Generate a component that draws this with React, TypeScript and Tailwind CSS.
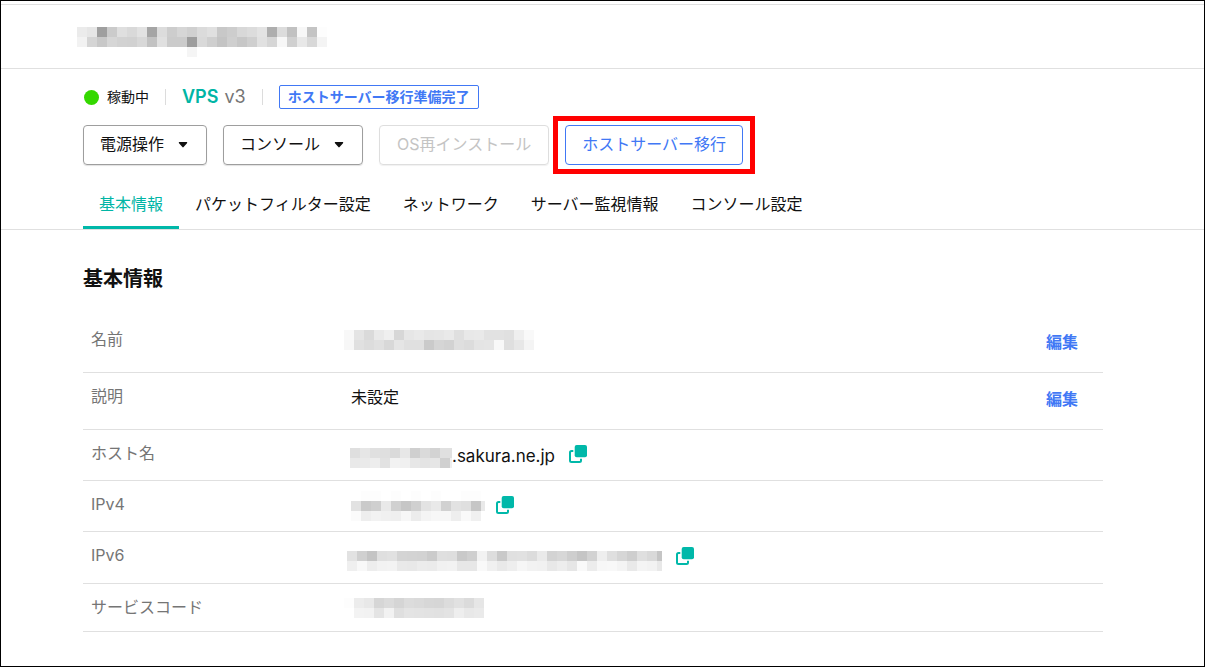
import React from "react";

const CELL = 10;

type MosaicProps = {
  label: string;
  rows: string[];
  left: number;
  top: number;
  width: number;
  height: number;
};

// Each row lists one two-digit hex grey level per cell; ".." leaves a cell empty.
function Mosaic({ label, rows, left, top, width, height }: MosaicProps) {
  return (
    <svg role="img" aria-label={label} width={width} height={height} className="shrink-0" shapeRendering="crispEdges">
      {rows.map((row, y) =>
        row.split(" ").map((g, x) =>
          g === ".." ? null : (
            <rect
              key={`${x}-${y}`}
              x={left + x * CELL}
              y={top + y * CELL}
              width={CELL}
              height={CELL}
              fill={`#${g}${g}${g}`}
            />
          ),
        ),
      )}
    </svg>
  );
}

function CopyButton({ label }: { label: string }) {
  return (
    <button type="button" aria-label={label} className="cursor-pointer text-[#00b8a9]">
      <svg width="18" height="18" viewBox="0 0 18 18" fill="none">
        <rect x="5.7" y="0" width="12.3" height="12.3" rx="2" fill="currentColor" />
        <path
          d="M4.300 6H2.500A1.500 1.500 0 0 0 1 7.500v8A1.500 1.500 0 0 0 2.500 17h8a1.500 1.500 0 0 0 1.500-1.500v-1.800"
          stroke="currentColor"
          strokeWidth="2"
        />
      </svg>
    </button>
  );
}

function Caret() {
  return (
    <svg width="10" height="6" viewBox="0 0 10 6" fill="currentColor" aria-hidden="true">
      <path d="M1.500 0h7c.7 0 1 .700.5 1.200L5.600 5.100a.8.8 0 0 1-1.200 0L1 1.200C.5.700.8 0 1.500 0z" />
    </svg>
  );
}

function MenuButton({ children }: { children: React.ReactNode }) {
  return (
    <button
      type="button"
      aria-haspopup="menu"
      className="flex h-10 cursor-pointer items-center gap-[14px] rounded border border-[#9e9e9e] pr-[18px] pl-4 shadow-[0_1px_1px_rgba(0,0,0,0.12)]"
    >
      <span className="pb-0.5">{children}</span>
      <Caret />
    </button>
  );
}

const tabs = ["基本情報", "パケットフィルター設定", "ネットワーク", "サーバー監視情報", "コンソール設定"];

function Row({
  label,
  height,
  action,
  children,
}: {
  label: string;
  height: string;
  action?: boolean;
  children: React.ReactNode;
}) {
  return (
    <tr className={`border-b border-[#e0e0e0] align-top ${height}`}>
      <th scope="row" className="w-[260px] px-2 pt-[11px] text-left font-normal text-[#757575]">
        {label}
      </th>
      <td className="pt-px">
        <div className="flex h-[46px] items-center">{children}</div>
      </td>
      <td className="w-20 pr-[25px] text-right">
        {action && (
          <a href="#edit" aria-label={`${label}を編集`} className="block pt-[14px] font-bold text-[#4178f5]">
            編集
          </a>
        )}
      </td>
    </tr>
  );
}

export default function App() {
  return (
    <div className="flex min-h-screen flex-col border border-black bg-white pt-[3px] font-['Inter','Noto_Sans_CJK_JP',sans-serif] text-base leading-6 text-[#111]">
      <header className="flex h-16 items-start border-t border-[#e0e0e0] pt-[22px] pl-[76px]">
        <Mosaic
          label="サーバー名"
          left={0}
          top={0}
          width={250}
          height={30}
          rows={[
            "eb e6 9f cb df d9 e2 a5 dc cd d6 d0 db e0 c8 cd d8 dc e3 ae dc c1 f7 c4 fd",
            "f2 d5 c8 d6 d2 d1 d8 c2 e0 cb cb 9d d9 cf c4 cf c7 cf e1 d6 f7 d0 e8 d8 f4",
            ".. .. .. .. .. .. .. .. .. .. .. f5",
          ]}
        />
      </header>

      <section className="border-y border-[#e0e0e0] pt-4 pr-[101px] pl-[82px]">
        <div className="flex h-6 items-center gap-4">
          <p className="flex items-center gap-2 pl-px text-sm">
            <span className="size-[15px] rounded-full bg-[#34d800]" />
            稼動中
          </p>
          <span className="h-4 w-px bg-[#dcdcdc]" />
          <p className="flex gap-1.5 text-lg">
            <span className="font-semibold text-[#00b5a5]">VPS</span>
            <span className="text-[#757575]">v3</span>
          </p>
          <span className="h-4 w-px bg-[#dcdcdc]" />
          <p className="flex h-6 items-center rounded-xs border border-[#4178f5] px-2 text-sm font-bold text-[#4178f5]">
            ホストサーバー移行準備完了
          </p>
        </div>

        <div className="mt-4 flex gap-4">
          <MenuButton>電源操作</MenuButton>
          <MenuButton>コンソール</MenuButton>
          <button
            type="button"
            disabled
            className="h-10 rounded border border-[#dedede] px-[17px] pb-0.5 text-[#c4c4c4] shadow-[0_1px_1px_rgba(0,0,0,0.06)]"
          >
            OS再インストール
          </button>
          <div className="relative">
            <button
              type="button"
              className="h-10 cursor-pointer rounded border border-[#4178f5] px-4 pb-0.5 text-[#4178f5]"
            >
              ホストサーバー移行
            </button>
            <span className="pointer-events-none absolute -inset-x-3 -inset-y-[9px] border-5 border-[#ff0000]" />
          </div>
        </div>

        <nav className="mt-5 flex">
          {tabs.map((tab, i) => (
            <a
              key={tab}
              href="#tab"
              aria-current={i === 0 ? "page" : undefined}
              className={
                i === 0
                  ? "border-b-3 border-[#00b8a9] px-4 pt-[7px] pb-[10px] text-[#00b5a5]"
                  : "border-b-3 border-transparent px-4 pt-[7px] pb-[10px]"
              }
            >
              {tab}
            </a>
          ))}
        </nav>
      </section>

      <main className="pt-[35px] pr-[101px] pl-[82px]">
        <h1 className="text-xl leading-7 font-bold">基本情報</h1>
        <table className="mt-[23px] w-full border-collapse">
          <tbody>
            <Row label="名前" height="h-14" action>
              <Mosaic
                label="名前"
                left={1}
                top={13}
                width={191}
                height={46}
                rows={[
                  "f8 e4 da e9 ef d7 e6 e9 e5 e6 e9 df e8 e9 e2 e2 e0 ef f9",
                  "f7 e0 dc e0 d8 e5 e0 e0 ca d5 d2 df dc e4 e5 f8 df e7 f4",
                ]}
              />
            </Row>
            <Row label="説明" height="h-[57px]" action>
              <span className="pl-2">未設定</span>
            </Row>
            <Row label="ホスト名" height="h-[51px]">
              <Mosaic
                label="ホスト名"
                left={7}
                top={17}
                width={109}
                height={46}
                rows={["df e6 e0 df da e7 cf da d3 e0 e0", "e9 ea ed e2 f2 f0 e7 e4 e6 d0 ef"]}
              />
              <span className="pt-1 pr-[14px] text-[17px]">.sakura.ne.jp</span>
              <CopyButton label="ホスト名をコピー" />
            </Row>
            <Row label="IPv4" height="h-[51px]">
              <Mosaic
                label="IPv4アドレス"
                left={8}
                top={9}
                width={142}
                height={46}
                rows={[
                  ".. fd fd .. fd .. fd .. fd .. .. fd fd",
                  "e2 ca cf e9 d0 c6 d0 e3 e9 d1 e2 df c6 e9",
                  "fb ee f2 f0 ef f7 ec f4 f7 f7 ee f9 f0",
                ]}
              />
              <span className="w-[11px]" />
              <CopyButton label="IPv4アドレスをコピー" />
            </Row>
            <Row label="IPv6" height="h-[52px]">
              <Mosaic
                label="IPv6アドレス"
                left={4}
                top={18}
                width={319}
                height={46}
                rows={[
                  "e2 d0 c4 df e1 d4 d3 d2 cb df de c9 cf f2 dd c9 e0 e1 dc ea d3 d7 ce c5 d2 ee df d6 ce df d9 c5",
                  "ef f8 ed f2 f3 e9 e8 ec eb f1 f2 e7 e7 f9 f0 e9 ee f6 f2 f1 e8 ed e6 f9 ec f7 f8 f4 e9 f4 f2 e8",
                ]}
              />
              <span className="w-[14px]" />
              <CopyButton label="IPv6アドレスをコピー" />
            </Row>
            <Row label="サービスコード" height="h-12">
              <Mosaic
                label="サービスコード"
                left={1}
                top={13}
                width={141}
                height={46}
                rows={[
                  "fd ec e8 d6 db d5 dc da d7 d6 dc e1 db e6",
                  ".. f3 f2 e4 f2 df e4 e3 e2 e1 e3 ee e8 ea",
                ]}
              />
            </Row>
          </tbody>
        </table>
      </main>
    </div>
  );
}
